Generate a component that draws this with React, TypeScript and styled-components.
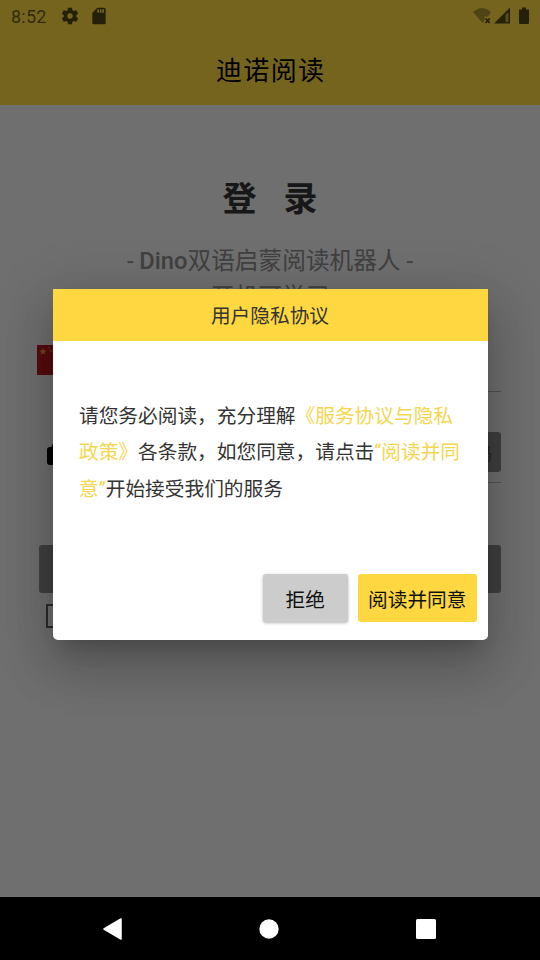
import React from 'react';
import styled, { createGlobalStyle } from 'styled-components';

const Global = createGlobalStyle`
  * { box-sizing: border-box; }
  body { margin: 0; }
  button { border: 0; font: inherit; padding: 0; }
`;

const Screen = styled.div`
  position: relative;
  width: 540px;
  height: 960px;
  overflow: hidden;
  display: flex;
  flex-direction: column;
  background: #f2f2f2;
  font-family: Roboto, 'Noto Sans CJK SC', sans-serif;
`;

const Header = styled.header`
  height: 105px;
  flex: none;
  background: #ffdb42;
`;

const StatusBar = styled.div`
  height: 32px;
  display: flex;
  align-items: center;
  justify-content: space-between;
  padding: 0 8px 0 11px;
  font-size: 18px;
  color: rgba(0, 0, 0, 0.68);
  svg { display: block; }
`;

const StatusGroup = styled.div`
  display: flex;
  align-items: center;
`;

const Clock = styled.span`
  width: 49px;
  padding-top: 1px;
  letter-spacing: 0.2px;
  color: rgba(0, 0, 0, 0.6);
`;

const Title = styled.h1`
  margin: 0;
  height: 73px;
  font-weight: 400;
  font-size: 26px;
  line-height: 79px;
  letter-spacing: 1.4px;
  text-indent: 1.4px;
  text-align: center;
  color: #000;
`;

const Page = styled.main`
  flex: 1;
  display: flex;
  flex-direction: column;
  padding: 0 39px;
`;

const Heading = styled.h2`
  margin: 69px 0 0;
  height: 50px;
  line-height: 50px;
  font-size: 34px;
  font-weight: 700;
  color: #333;
  display: flex;
  justify-content: center;
  gap: 27px;
`;

const Tagline = styled.p`
  margin: 19px 0 0;
  text-align: center;
  font-size: 23.7px;
  line-height: 36px;
  height: 76px;
  white-space: pre-line;
  color: #8c8c8c;
`;

const Latin = styled.span`
  font-weight: 500;
`;

const Field = styled.div<{ $height: number }>`
  height: ${(p) => p.$height}px;
  display: flex;
  align-items: flex-end;
  svg { display: block; flex: none; }
`;

const FieldInput = styled.div`
  flex: 1;
  align-self: stretch;
  margin-left: 16px;
  display: flex;
  align-items: flex-end;
  justify-content: flex-end;
  border-bottom: 1px solid #b4b4b4;
`;

const FlagSlot = styled.span`
  margin: 0 0 17px -2px;
`;

const LockSlot = styled.span`
  margin: 0 0 18px 8px;
`;

const CodeButton = styled.button`
  width: 110px;
  height: 40px;
  margin-bottom: 10px;
  border-radius: 3px;
  background: #8c8c8c;
  color: #505050;
  font-size: 17px;
  text-align: right;
  padding-right: 9px;
`;

const Submit = styled.button`
  margin-top: 62px;
  height: 48px;
  flex: none;
  border-radius: 3px;
  background: #8c8c8c;
`;

const Checkbox = styled.div`
  margin: 11px 0 0 7px;
  width: 24px;
  height: 24px;
  border: 2.5px solid #5e5e5e;
  border-radius: 1px;
`;

const NavBar = styled.nav`
  height: 63px;
  flex: none;
  background: #000;
  display: flex;
  align-items: center;
  justify-content: space-between;
  padding: 0 104.5px 0 103px;
  svg { display: block; }
`;

const Scrim = styled.div`
  position: absolute;
  inset: 0 0 63px;
  background: rgba(0, 0, 0, 0.54);
`;

const Dialog = styled.section`
  position: absolute;
  left: 52.5px;
  top: 288.5px;
  width: 435px;
  height: 351.5px;
  display: flex;
  flex-direction: column;
  background: #fff;
  border-radius: 0 0 5px 5px;
  overflow: hidden;
  box-shadow: 0 14px 19px -9px rgba(0, 0, 0, 0.2), 0 30px 48px 4px rgba(0, 0, 0, 0.14),
    0 11px 58px 10px rgba(0, 0, 0, 0.12);
`;

const DialogTitle = styled.h3`
  margin: 0;
  height: 52.5px;
  flex: none;
  background: #ffd740;
  text-align: center;
  font-weight: 400;
  font-size: 19.7px;
  line-height: 56px;
  color: #333;
`;

const Body = styled.p`
  margin: 0;
  padding: 57.5px 0 0 26.5px;
  flex: 1;
  font-size: 19.7px;
  line-height: 36.8px;
  white-space: pre;
  color: #333;
`;

const Accent = styled.span`
  color: #f5d64e;
`;

const Actions = styled.div`
  display: flex;
  justify-content: flex-end;
  gap: 10px;
  padding: 0 10.5px 18px 0;
`;

const Action = styled.button<{ $primary?: boolean }>`
  width: ${(p) => (p.$primary ? 119.5 : 84.5)}px;
  height: 48px;
  border-radius: 3px;
  background: ${(p) => (p.$primary ? '#ffd740' : '#cccccc')};
  box-shadow: ${(p) => (p.$primary ? 'none' : '0 1px 3px rgba(0,0,0,.3)')};
  font-size: 19.7px;
  color: #111;
`;

const GearIcon = () => (
  <svg width="20" height="20" viewBox="0 0 24 24" fill="currentColor">
    <path d="M19.43 12.98c.04-.32.07-.64.07-.98s-.03-.66-.07-.98l2.11-1.65c.19-.15.24-.42.12-.64l-2-3.46c-.12-.22-.39-.3-.61-.22l-2.49 1c-.52-.4-1.08-.73-1.69-.98l-.38-2.65C14.46 2.18 14.25 2 14 2h-4c-.25 0-.46.18-.49.42l-.38 2.65c-.61.25-1.17.59-1.69.98l-2.49-1c-.23-.09-.49 0-.61.22l-2 3.46c-.13.22-.07.49.12.64l2.11 1.65c-.04.32-.07.65-.07.98s.03.66.07.98l-2.11 1.65c-.19.15-.24.42-.12.64l2 3.46c.12.22.39.3.61.22l2.49-1c.52.4 1.08.73 1.69.98l.38 2.65c.03.24.24.42.49.42h4c.25 0 .46-.18.49-.42l.38-2.65c.61-.25 1.17-.59 1.69-.98l2.49 1c.23.09.49 0 .61-.22l2-3.46c.12-.22.07-.49-.12-.64zM12 15.2a3.2 3.2 0 1 1 0-6.4 3.2 3.2 0 0 1 0 6.4z" />
  </svg>
);

const CardSlot = styled.span`
  margin-left: 9px;
`;

const SdCardIcon = () => (
  <svg width="20" height="20" viewBox="0 0 24 24" fill="currentColor">
    <path d="M18 2h-8L4.02 8 4 20c0 1.1.9 2 2 2h12c1.1 0 2-.9 2-2V4c0-1.1-.9-2-2-2zm-6 6h-2V4h2v4zm3 0h-2V4h2v4zm3 0h-2V4h2v4z" />
  </svg>
);

const StatusIcons = () => (
  <svg width="62" height="20" viewBox="0 0 62 20">
    <path d="M3 6Q12 -2 21 6L18 10.500H14.500V15L12.500 17Z" fill="#000" opacity=".32" />
    <path d="M15.500 12.500l4.200 4.500m0-4.500l-4.200 4.500" stroke="currentColor" strokeWidth="1.800" fill="none" />
    <path d="M24 17.500L40 1.500V17.500Z" fill="currentColor" />
    <path d="M35.500 8.500L38.500 6V16H35.500Z" fill="#bfa43a" />
    <path d="M49 3.500h3V1.500h4v2h3v13.500q0 1-1 1H50q-1 0-1-1Z" fill="currentColor" />
  </svg>
);

const FlagIcon = () => (
  <svg width="44" height="30" viewBox="0 0 44 30">
    <rect width="44" height="30" fill="#bd1a20" />
    <path d="M6 3l1 2.500h2.700L7.500 7.200l.9 2.600L6 8.300 3.600 9.800l.9-2.600L2.300 5.500H5z" fill="#e9a340" />
    <circle cx="12" cy="2.500" r="1" fill="#d9702c" />
    <circle cx="14" cy="6" r="1" fill="#d9702c" />
  </svg>
);

const LockIcon = () => (
  <svg width="22" height="24" viewBox="0 0 22 24">
    <path d="M3 6H19Q22 6 22 9V21Q22 24 19 24H3Q0 24 0 21V9Q0 6 3 6Z" />
    <path d="M5.500 8V7a5.500 5.500 0 0 1 11 0v1" fill="none" stroke="#000" strokeWidth="2.500" />
  </svg>
);

export default function App() {
  return (
    <>
      <Global />
      <Screen>
        <Header>
          <StatusBar>
            <StatusGroup>
              <Clock>8:52</Clock>
              <GearIcon />
              <CardSlot>
                <SdCardIcon />
              </CardSlot>
            </StatusGroup>
            <StatusIcons />
          </StatusBar>
          <Title>迪诺阅读</Title>
        </Header>
        <Page>
          <Heading>
            <span>登</span>
            <span>录</span>
          </Heading>
          <Tagline>
            - <Latin>Dino</Latin>双语启蒙阅读机器人 -{'\n'}开机可学习
          </Tagline>
          <Field $height={73}>
            <FlagSlot>
              <FlagIcon />
            </FlagSlot>
            <FieldInput />
          </Field>
          <Field $height={91}>
            <LockSlot>
              <LockIcon />
            </LockSlot>
            <FieldInput>
              <CodeButton>获取验证码</CodeButton>
            </FieldInput>
          </Field>
          <Submit />
          <Checkbox />
        </Page>
        <NavBar>
          <svg width="20" height="22" viewBox="0 0 20 22">
            <path d="M1 11L18 1V21Z" fill="#fff" stroke="#fff" strokeWidth="1.500" strokeLinejoin="round" />
          </svg>
          <svg width="20" height="20" viewBox="0 0 20 20">
            <circle cx="10" cy="10" r="9.700" fill="#fff" />
          </svg>
          <svg width="20" height="20" viewBox="0 0 20 20">
            <rect width="20" height="20" rx="1.500" fill="#fff" />
          </svg>
        </NavBar>
        <Scrim />
        <Dialog>
          <DialogTitle>用户隐私协议</DialogTitle>
          <Body>
            请您务必阅读，充分理解<Accent>《服务协议与隐私{'\n'}政策》</Accent>
            各条款，如您同意，请点击<Accent>“阅读并同{'\n'}意”</Accent>开始接受我们的服务
          </Body>
          <Actions>
            <Action>拒绝</Action>
            <Action $primary>阅读并同意</Action>
          </Actions>
        </Dialog>
      </Screen>
    </>
  );
}
